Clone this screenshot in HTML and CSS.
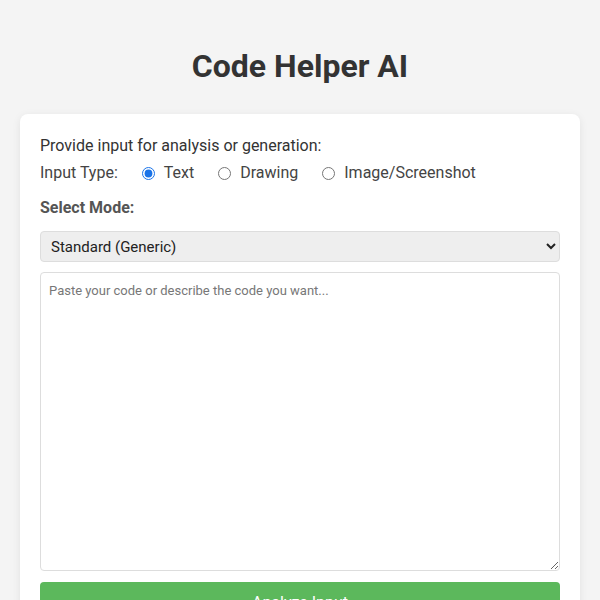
FILE: index.html
```html
<!DOCTYPE html>
<html>
<head>
<meta charset="utf-8">
<link rel="stylesheet" href="styles.css">
</head>
<body>
<h1 class="title">Code Helper AI</h1>
<div class="card">
  <p class="intro">Provide input for analysis or generation:</p>
  <div class="type-row">
    <span class="type-label">Input Type:</span>
    <label class="opt"><input type="radio" name="t" checked><span>Text</span></label>
    <label class="opt"><input type="radio" name="t"><span>Drawing</span></label>
    <label class="opt"><input type="radio" name="t"><span>Image/Screenshot</span></label>
  </div>
  <div class="mode-label">Select Mode:</div>
  <select class="mode">
    <option>Standard (Generic)</option>
  </select>
  <textarea class="code" placeholder="Paste your code or describe the code you want..."></textarea>
  <button class="analyze">Analyze Input</button>
</div>
</body>
</html>
```

FILE: styles.css
```css
html, body {
  margin: 0;
  background: #f4f4f4;
}
body {
  padding: 30px 20px;
  font-family: Roboto, "Liberation Sans", sans-serif;
  color: #333;
}
.title {
  margin: 18px 0 29px;
  font-size: 32px;
  line-height: 37px;
  font-weight: 700;
  text-align: center;
  color: #333;
}
.card {
  background: #fff;
  border-radius: 8px;
  padding: 20px;
  box-shadow: 0 2px 8px rgba(0,0,0,0.08);
  display: flex;
  flex-direction: column;
}
.intro {
  margin: 0;
  font-size: 16px;
  line-height: 24px;
}
.type-row {
  display: flex;
  align-items: center;
  margin-top: 3px;
  font-size: 16px;
  line-height: 24px;
  color: #444;
}
.type-label {
  margin-right: 24px;
}
.opt {
  display: inline-flex;
  align-items: center;
  margin-right: 24px;
}
.opt input {
  margin: 0 9px 0 0;
  width: 13px;
  height: 13px;
  accent-color: #1a73e8;
}
.mode-label {
  margin-top: 11px;
  font-size: 16px;
  line-height: 24px;
  font-weight: 700;
  color: #555;
}
.mode {
  margin-top: 11px;
  height: 31px;
  padding: 0 6px;
  font-family: Roboto, "Liberation Sans", sans-serif;
  font-size: 15px;
  color: #222;
  background: #eee;
  border: 1px solid #ddd;
  border-radius: 4px;
}
.code {
  margin-top: 10px;
  height: 299px;
  box-sizing: border-box;
  padding: 10px 8px;
  font-family: Roboto, "Liberation Sans", sans-serif;
  font-size: 13px;
  border: 1px solid #ddd;
  border-radius: 4px;
  resize: vertical;
}
.code::placeholder {
  color: #777;
}
.analyze {
  margin-top: 11px;
  height: 40px;
  background: #5cb85c;
  color: #fff;
  border: none;
  border-radius: 4px;
  font-family: Roboto, "Liberation Sans", sans-serif;
  font-size: 16px;
}
```
